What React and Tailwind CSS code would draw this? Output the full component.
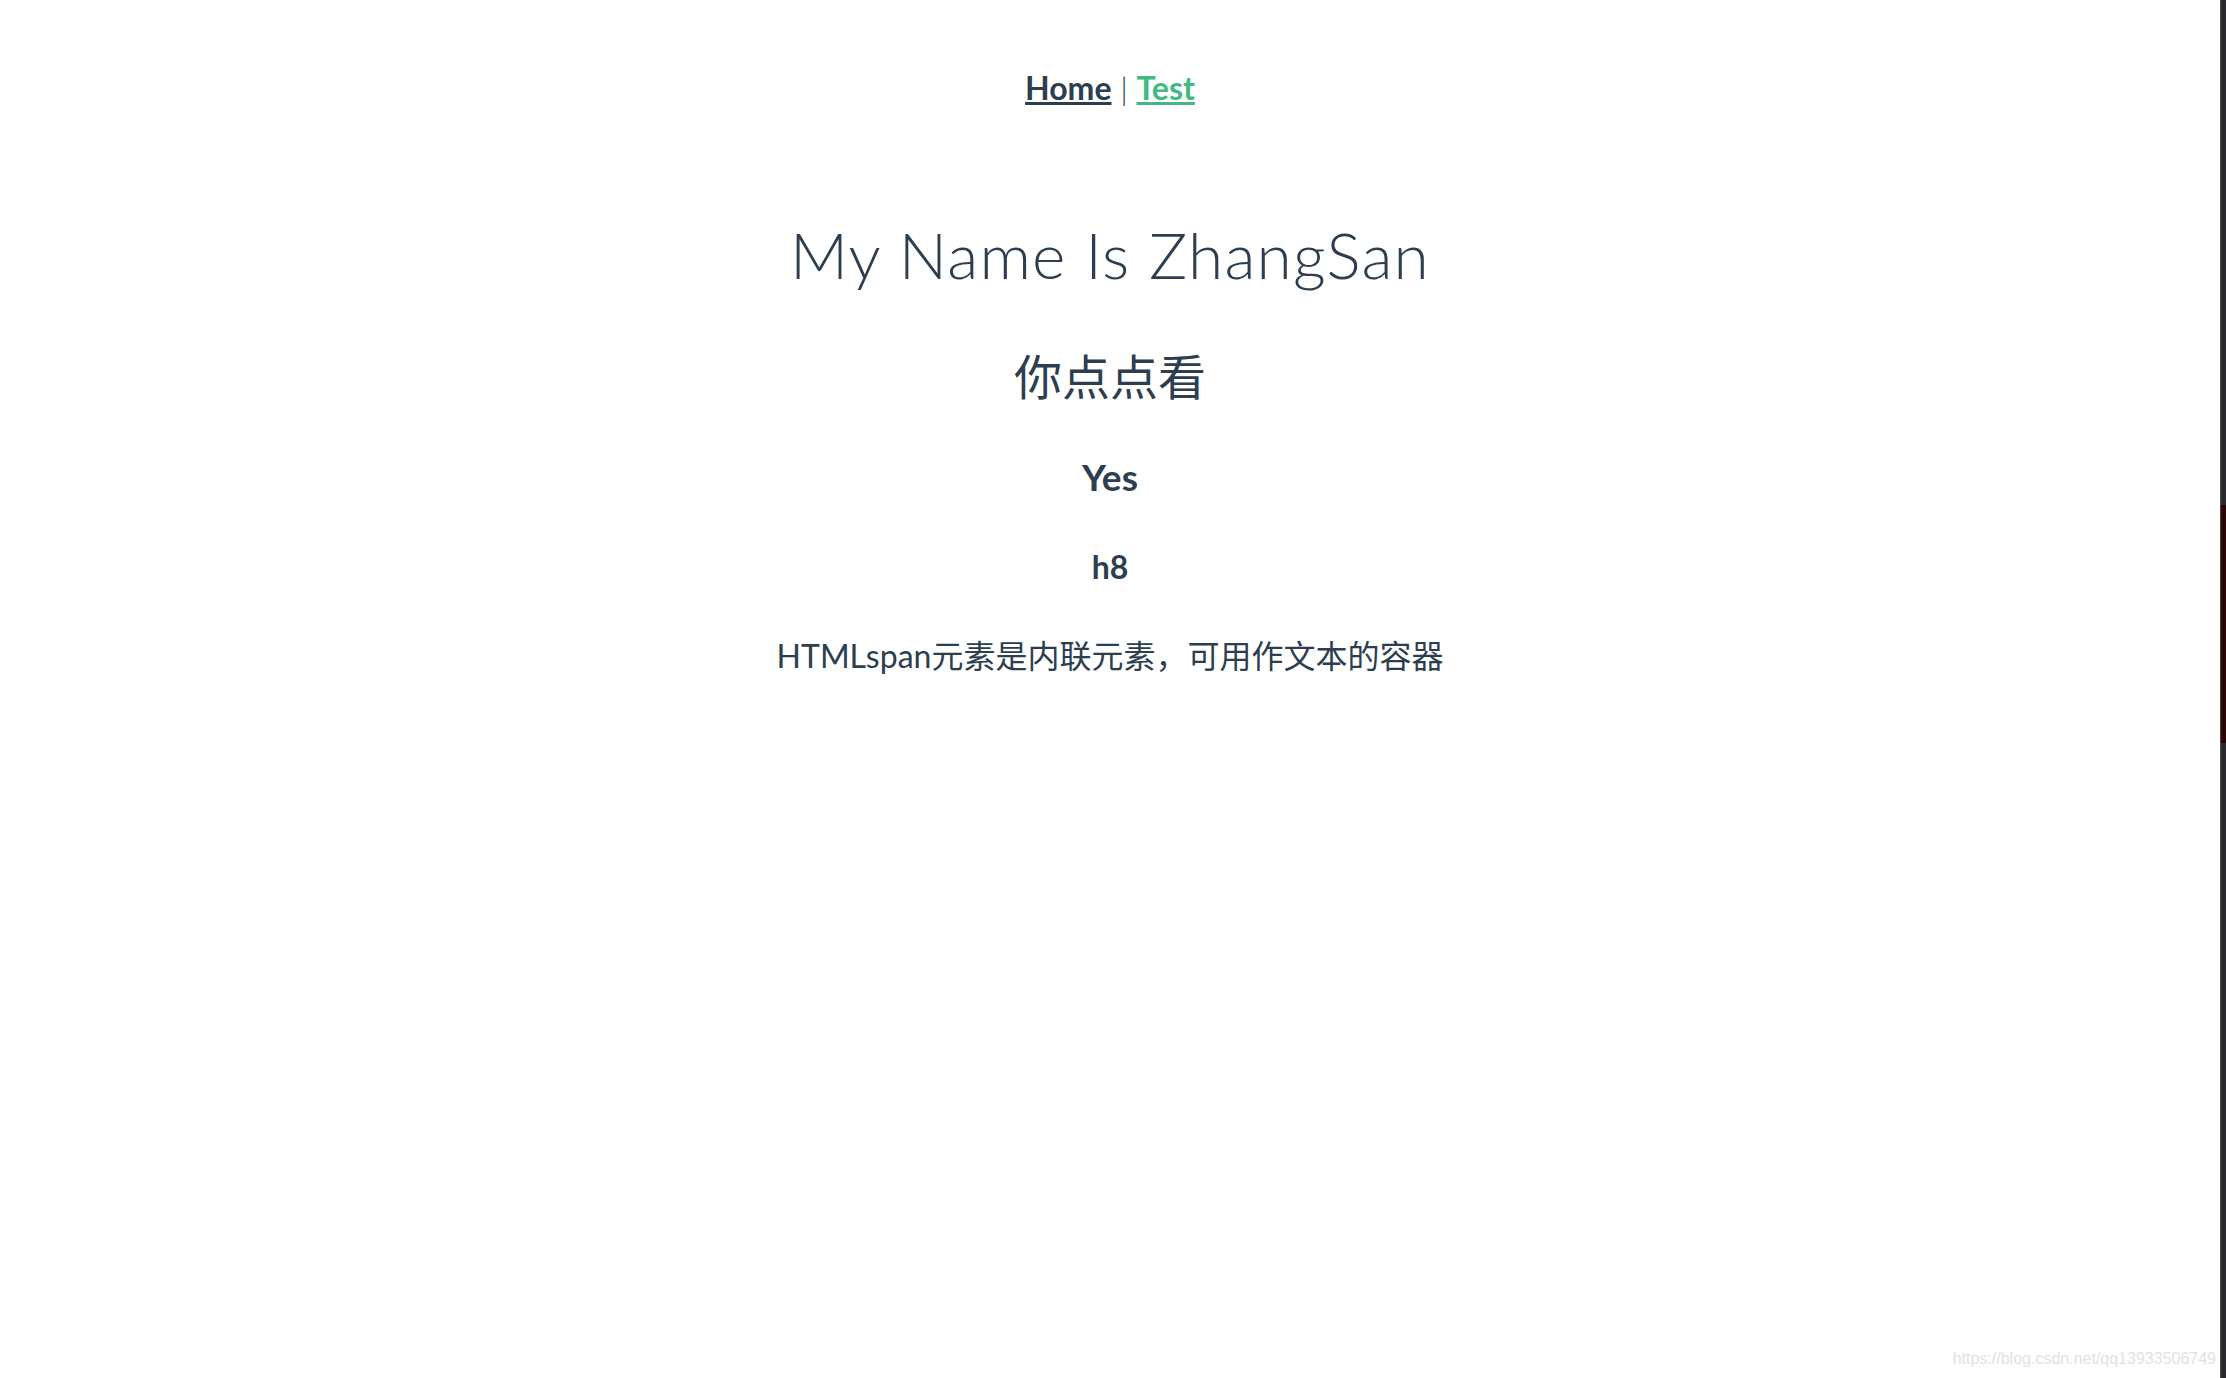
import React from 'react';

const latin = { fontFamily: 'Lato, "Noto Sans CJK SC", sans-serif' };

const App = () => {
  return (
    <div className="w-screen h-screen flex bg-white overflow-hidden text-[#2c3e50]" style={latin}>
      <div className="relative flex-1 flex flex-col items-center text-center">
        {/* nav */}
        <div className="pt-[68px] text-[32px] leading-[40px]">
          <a href="#" className="font-bold underline text-[#2c3e50]">Home</a>
          <span className="font-light"> | </span>
          <a href="#" className="font-bold underline text-[#42b983]">Test</a>
        </div>

        <h1 className="mt-[107px] text-[64px] leading-[80px] font-light tracking-[1.2px]">My Name Is ZhangSan</h1>
        <h2 className="mt-[52px] text-[48px] leading-[60px] font-normal">你点点看</h2>
        <h3 className="mt-[47px] text-[37px] leading-[46px] font-bold">Yes</h3>
        <div className="mt-[47px] text-[32px] leading-[40px] font-bold">h8</div>
        <div className="mt-[49px] text-[32px] leading-[40px]">HTMLspan元素是内联元素，可用作文本的容器</div>

        {/* watermark */}
        <div
          className="absolute right-[4px] bottom-[7px] text-[16px] text-[#e2e2e2]"
          style={{ fontFamily: '"Liberation Sans", Arial, sans-serif' }}
        >
          https://blog.csdn.net/qq13933506749
        </div>
      </div>

      {/* devtools edge */}
      <div className="w-[6px] flex flex-col bg-[#2a2a2e] border-l border-[#4a4a4e]">
        <div className="h-[505px]" />
        <div className="h-[238px] bg-[#2a0606]" />
        <div className="flex-1" />
      </div>
    </div>
  );
};

export default App;
